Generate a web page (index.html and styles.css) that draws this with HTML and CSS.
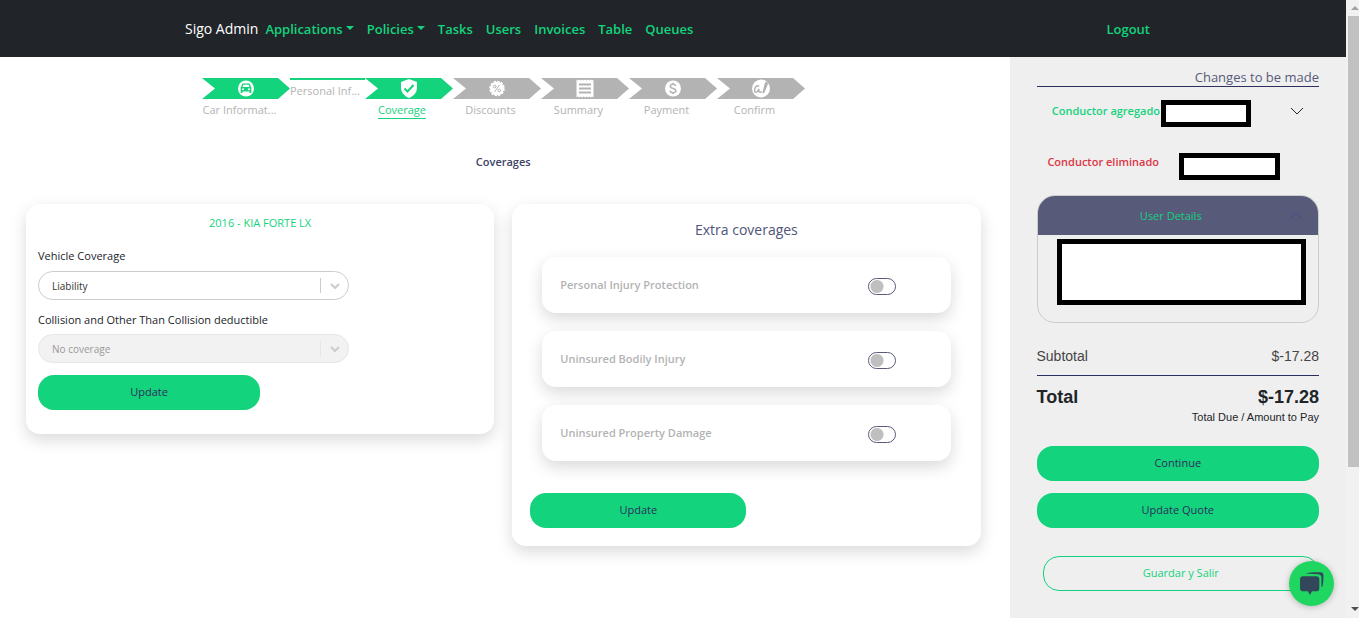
FILE: index.html
```html
<!DOCTYPE html>
<html lang="en">
<head>
  <meta charset="UTF-8" />
  <meta name="viewport" content="width=device-width, initial-scale=1.0" />
  <title>Sigo Admin</title>
  <link rel="stylesheet" href="styles.css">
</head>
<body>

  <div class="app">
    <header class="navbar">
      <nav class="nav">
        <a class="brand" href="#">Sigo Admin</a>
        <a class="dropdown" href="#">Applications</a>
        <a class="dropdown" href="#">Policies</a>
        <a href="#">Tasks</a>
        <a href="#">Users</a>
        <a href="#">Invoices</a>
        <a href="#">Table</a>
        <a href="#">Queues</a>
        <a class="logout" href="#">Logout</a>
      </nav>
    </header>

    <div class="content">
      <main class="main">
        <!-- Steps -->
        <ol class="steps">
          <li class="step done">
            <svg class="arrow" viewBox="0 0 88 21">
              <path class="shape" d="M0 0H76L88 10.500L76 21H0L13 10.500Z" />
              <circle cx="44" cy="10.500" r="8" fill="#fff" />
              <path class="shape" d="M40.500 5.500h7l1.800 4v5.500h-1.800v-1.500h-7v1.500h-1.800v-5.500z" />
              <path d="M41.300 6.800h5.400l.9 2.200h-7.200z" fill="#fff" />
              <circle cx="41" cy="11.300" r="1" fill="#fff" />
              <circle cx="47" cy="11.300" r="1" fill="#fff" />
            </svg>
            <span class="step-label">Car Informat...</span>
          </li>
          <li class="step small">
            <div class="line"></div>
            <span class="step-label">Personal Inf...</span>
          </li>
          <li class="step done current">
            <svg class="arrow" viewBox="0 0 88 21">
              <path class="shape" d="M0 0H76L88 10.500L76 21H0L13 10.500Z" />
              <path d="M44 1l8 3v5.500c0 5-3.300 8.500-8 10.500-4.700-2-8-5.500-8-10.500V4z" fill="#fff" />
              <path class="mark" d="M39.500 10.500l3 3 6-6.500" />
            </svg>
            <span class="step-label">Coverage</span>
          </li>
          <li class="step">
            <svg class="arrow" viewBox="0 0 88 21">
              <path class="shape" d="M0 0H76L88 10.500L76 21H0L13 10.500Z" />
              <circle cx="44" cy="10.500" r="6.800" fill="#fff" />
              <circle cx="44" cy="10.500" r="6.800" fill="none" stroke="#fff" stroke-width="2" stroke-dasharray="2.300 1.260" />
              <path class="thin" d="M41.500 14l5-7" />
              <circle class="thin" cx="41.700" cy="8.500" r="1.300" />
              <circle class="thin" cx="46.300" cy="12.500" r="1.300" />
            </svg>
            <span class="step-label">Discounts</span>
          </li>
          <li class="step">
            <svg class="arrow" viewBox="0 0 88 21">
              <path class="shape" d="M0 0H76L88 10.500L76 21H0L13 10.500Z" />
              <path d="M35.500 1.500l1.400 1 1.400-1 1.400 1 1.400-1 1.400 1 1.500-1 1.500 1 1.400-1 1.400 1 1.400-1 1.400 1 1.400-1v18l-1.400-1-1.400 1-1.400-1-1.400 1-1.400-1-1.500 1-1.500-1-1.400 1-1.400-1-1.400 1-1.400-1-1.400 1z" fill="#fff" />
              <path class="mark" d="M38 6.500h12M38 10.500h12M38 14.500h12" />
            </svg>
            <span class="step-label">Summary</span>
          </li>
          <li class="step">
            <svg class="arrow" viewBox="0 0 88 21">
              <path class="shape" d="M0 0H76L88 10.500L76 21H0L13 10.500Z" />
              <circle cx="44" cy="10.500" r="8" fill="#fff" />
              <path class="mark thick" d="M46.800 8c-.4-1.200-1.400-1.700-2.800-1.700-1.600 0-2.700.8-2.700 2 0 2.900 5.600 1.400 5.600 4.400 0 1.300-1.200 2-2.900 2-1.600 0-2.700-.7-3-2M44 4.800v1.500M44 14.700v1.500" />
            </svg>
            <span class="step-label">Payment</span>
          </li>
          <li class="step">
            <svg class="arrow" viewBox="0 0 88 21">
              <path class="shape" d="M0 0H76L88 10.500L76 21H0L13 10.500Z" />
              <circle cx="44" cy="10.500" r="9" fill="#fff" />
              <path class="mark thick" d="M42 8.500c-1.200-1.500-3.200-.5-4 1.500-1 2.500-.2 4.500 1.200 4.200 1.300-.2 2-1.700 2.800-3.200-.3 1.700 0 3 .8 3.200s1.400 0 1.900-.6" />
              <path class="shape" d="M48 4.500l2.500-1 .3 3-3.300 8-2 1.500.3-3z" />
            </svg>
            <span class="step-label">Confirm</span>
          </li>
        </ol>

        <h1 class="page-title">Coverages</h1>

        <div class="cards">
          <section class="card vehicle">
            <h2 class="vehicle-name">2016 - KIA FORTE LX</h2>

            <label for="coverage">Vehicle Coverage</label>
            <div class="select">
              <select id="coverage">
                <option>Liability</option>
                <option>Full coverage</option>
              </select>
              <svg viewBox="0 0 28 15"><path d="M10 6l4 4 4-4" /></svg>
            </div>

            <label for="deductible">Collision and Other Than Collision deductible</label>
            <div class="select disabled">
              <select id="deductible" disabled>
                <option>No coverage</option>
              </select>
              <svg viewBox="0 0 28 15"><path d="M10 6l4 4 4-4" /></svg>
            </div>

            <button class="btn half" type="button">Update</button>
          </section>

          <section class="card extra">
            <h2>Extra coverages</h2>
            <div class="extra-list">
              <label class="extra-item">
                <span>Personal Injury Protection</span>
                <input type="checkbox" class="toggle">
              </label>
              <label class="extra-item">
                <span>Uninsured Bodily Injury</span>
                <input type="checkbox" class="toggle">
              </label>
              <label class="extra-item">
                <span>Uninsured Property Damage</span>
                <input type="checkbox" class="toggle">
              </label>
            </div>
            <button class="btn half" type="button">Update</button>
          </section>
        </div>
      </main>

      <aside class="sidebar">
        <h2 class="changes-title">Changes to be made</h2>

        <div class="change added">
          <span>Conductor agregado</span>
          <div class="box"></div>
          <svg class="chevron" viewBox="0 0 14 8"><path d="M1 1l6 6 6-6" /></svg>
        </div>
        <div class="change removed">
          <span>Conductor eliminado</span>
          <div class="box"></div>
        </div>

        <div class="details">
          <button class="details-head" type="button">
            <span>User Details</span>
            <svg class="chevron" viewBox="0 0 14 8"><path d="M1 7l6-6 6 6" /></svg>
          </button>
          <div class="details-body">
            <div class="box"></div>
          </div>
        </div>

        <div class="row subtotal"><span>Subtotal</span><span>$-17.28</span></div>
        <div class="row total"><span>Total</span><span>$-17.28</span></div>
        <p class="note">Total Due / Amount to Pay</p>

        <div class="actions">
          <button class="btn" type="button">Continue</button>
          <button class="btn" type="button">Update Quote</button>
          <button class="btn outline" type="button">Guardar y Salir</button>
        </div>
      </aside>
    </div>
  </div>

  <!-- Scroll track -->
  <div class="scrollbar">
    <svg class="up" viewBox="0 0 11 16"><path d="M3 10l4-4 4 4z" /></svg>
    <div class="thumb"></div>
    <svg class="down" viewBox="0 0 11 16"><path d="M3 5h8l-4 4z" /></svg>
  </div>

  <button class="chat" type="button" aria-label="Chat">
    <svg viewBox="0 0 24 24">
      <path d="M4 5h12.500a3 3 0 0 1 3 3v8.500a3 3 0 0 1-3 3h-4L10.500 23l-2-3.500H4a3 3 0 0 1-3-3V8a3 3 0 0 1 3-3z" />
      <path d="M6 2.500C9 1 17 1 21 1.200c1.500.1 2.400 1 2.400 2.500.2 4 0 8-.9 11.300l-1-.2V6.500a3.500 3.500 0 0 0-3.500-3.500z" />
    </svg>
  </button>

</body>
</html>
```
FILE: styles.css
```css
* {
  box-sizing: border-box;
}

body {
  margin: 0;
  display: flex;
  height: 100vh;
  overflow: hidden;
  background: #fff;
  color: #212529;
  font-family: "Open Sans", "Noto Sans", sans-serif;
  font-size: 11px;
  line-height: 16px;
}

h1, h2, p, ol {
  margin: 0;
  padding: 0;
}

a {
  text-decoration: none;
}

button, select {
  font-family: inherit;
  font-size: inherit;
}

.app {
  flex: 1;
  display: flex;
  flex-direction: column;
  min-width: 0;
}

/* Navbar */
.navbar {
  background: #212529;
  padding: 0 196px 0 185px;
}

.nav {
  display: flex;
  align-items: center;
  gap: 13px;
  height: 57px;
}

.nav a {
  color: #13d37d;
  font-size: 13px;
  font-weight: 600;
}

.nav .brand {
  color: #fff;
  font-size: 14px;
  font-weight: 400;
  margin-right: -6px;
}

.dropdown::after {
  content: "";
  display: inline-block;
  margin-left: 3px;
  vertical-align: 4px;
  border: 4px solid transparent;
  border-top-color: #13d37d;
  border-bottom: 0;
}

.nav .logout {
  margin-left: auto;
}

.content {
  flex: 1;
  display: grid;
  grid-template-columns: 3fr 1fr;
}

.main {
  padding: 21px 29px 0 26px;
}

/* Steps */
.steps {
  display: flex;
  list-style: none;
  margin-left: 176px;
  height: 44px;
}

.step {
  width: 88px;
  color: #b3b3b3;
}

.step.small {
  width: 75px;
}

.arrow {
  display: block;
  width: 88px;
  height: 21px;
}

.shape {
  fill: #b3b3b3;
}

.mark {
  fill: none;
  stroke: #b3b3b3;
  stroke-width: 2;
}

.thick {
  stroke-width: 1.5;
}

.thin {
  fill: none;
  stroke: #b3b3b3;
}

.done .shape {
  fill: #13d37d;
}

.done .mark {
  stroke: #13d37d;
}

.line {
  height: 2px;
  background: #13d37d;
}

.step-label {
  display: block;
  width: 75px;
  margin-top: 3px;
  text-align: center;
  white-space: nowrap;
  font-weight: 500;
}

.small .step-label {
  text-align: left;
}

.current .step-label {
  width: fit-content;
  margin-left: 13px;
  color: #13d37d;
  border-bottom: 1px solid #13d37d;
}

.page-title {
  margin: 32px 0 34px;
  text-align: center;
  font-size: 11px;
  line-height: 16px;
  font-weight: 600;
  color: #3d4266;
}

/* Cards */
.cards {
  display: grid;
  grid-template-columns: 1fr 1fr;
  align-items: start;
  gap: 18px;
}

.card {
  background: #fff;
  border-radius: 14px;
  box-shadow: 0 6px 16px rgba(0, 0, 0, 0.15);
}

.vehicle {
  padding: 11px 12px 24px;
}

.vehicle-name {
  text-align: center;
  font-size: 11px;
  line-height: 16px;
  font-weight: 400;
  color: #13d37d;
  margin-bottom: 17px;
}

.vehicle label {
  display: block;
  color: #212529;
}

.select {
  position: relative;
  width: 70%;
  height: 29px;
  margin: 7px 0 12px;
}

.select select {
  width: 100%;
  height: 100%;
  padding: 0 13px;
  appearance: none;
  background: #fff;
  border: 1px solid #ccc;
  border-radius: 15px;
  color: #333;
  font-size: 10px;
  opacity: 1;
}

/* Divider and arrow sit over the select */
.select svg {
  position: absolute;
  top: 7px;
  right: 0;
  width: 29px;
  height: 15px;
  border-left: 1px solid #ccc;
  fill: none;
  stroke: #ccc;
  stroke-width: 2;
  pointer-events: none;
}

.select.disabled {
  margin-top: 6px;
}

.disabled select {
  background: #f2f2f2;
  border-color: #e6e6e6;
  color: #999;
}

.disabled svg {
  border-color: #e6e6e6;
}

.btn {
  display: block;
  width: 100%;
  height: 35px;
  padding: 0 0 2px;
  background: #13d37d;
  border: 0;
  border-radius: 16px;
  color: #2b2f5b;
  font-size: 11px;
}

.btn.half {
  width: 50%;
}

.extra {
  padding: 18px;
}

.extra h2 {
  text-align: center;
  font-size: 14px;
  line-height: 16px;
  font-weight: 500;
  color: #4f5478;
}

.extra-list {
  display: flex;
  flex-direction: column;
  gap: 18px;
  margin: 19px 12px 32px;
}

.extra-item {
  display: flex;
  align-items: center;
  justify-content: space-between;
  height: 56px;
  padding: 0 55px 0 18px;
  border-radius: 14px;
  box-shadow: 0 6px 16px rgba(0, 0, 0, 0.15);
  background: #fff;
  color: #b3b3b3;
  font-weight: 600;
}

.toggle {
  appearance: none;
  width: 28px;
  height: 17px;
  margin: 2px 0 0;
  border: 1px solid #575a79;
  border-radius: 9px;
  background: radial-gradient(circle at 8px 50%, #bfbfbf 6px, transparent 7px);
}

/* Sidebar */
.sidebar {
  padding: 12px 27px;
  background: #efefef;
}

.changes-title {
  padding-bottom: 1px;
  border-bottom: 1px solid #2b2f5b;
  text-align: right;
  font-size: 13px;
  line-height: 16px;
  font-weight: 400;
  color: #575a79;
}

.box {
  background: #fff;
  border: 5px solid #000;
}

.change {
  display: flex;
  align-items: center;
  height: 27px;
  font-weight: 600;
}

.change span {
  flex: 1;
  padding-bottom: 5px;
  text-align: right;
  white-space: nowrap;
}

.change .box {
  height: 27px;
}

.chevron {
  width: 14px;
  height: 8px;
  fill: none;
  stroke: #212529;
}

.added {
  margin-top: 13px;
  padding-right: 15px;
  color: #13d37d;
}

.added .box {
  width: 90px;
  margin: 0 39px 0 1px;
}

.added .chevron {
  margin-bottom: 5px;
}

.removed {
  margin-top: 26px;
  padding-right: 39px;
  color: #dc3545;
}

.removed span {
  padding-bottom: 9px;
}

.removed .box {
  width: 101px;
  margin-left: 20px;
}

.details {
  height: 128px;
  margin-top: 15px;
  border: 1px solid #ccc;
  border-radius: 18px;
  overflow: hidden;
}

.details-head {
  display: flex;
  align-items: center;
  width: 100%;
  height: 39px;
  padding: 0 15px;
  background: #575a79;
  border: 0;
  color: #13d37d;
}

.details-head span {
  flex: 1;
}

.details-head .chevron {
  stroke: #563d8f;
}

.details-body {
  padding: 4px 12px 0 19px;
}

.details-body .box {
  height: 66px;
}

.row {
  display: flex;
  justify-content: space-between;
  font-family: "Liberation Sans", Arial, sans-serif;
}

.subtotal {
  margin-top: 25px;
  padding-bottom: 11px;
  border-bottom: 1px solid #2b2f5b;
  font-size: 14px;
  color: #444;
}

.total {
  margin-top: 11px;
  font-size: 18px;
  line-height: 20px;
  font-weight: 700;
}

.note {
  margin-top: 3px;
  text-align: right;
  font-family: "Liberation Sans", Arial, sans-serif;
  font-size: 11px;
  line-height: 14px;
}

.actions {
  display: flex;
  flex-direction: column;
  gap: 12px;
  margin-top: 22px;
}

.btn.outline {
  width: auto;
  margin: 16px 0 0 6px;
  background: transparent;
  border: 1px solid #13d37d;
  color: #13d37d;
}

/* Scroll track */
.scrollbar {
  display: flex;
  flex-direction: column;
  width: 13px;
  padding-left: 2px;
  background: #f1f1f1;
}

.scrollbar svg {
  flex: none;
  height: 16px;
  fill: #505050;
}

.scrollbar .up {
  fill: #a3a3a3;
}

.scrollbar .thumb {
  height: 73%;
  background: #c1c1c1;
}

.scrollbar .down {
  margin-top: auto;
}

.chat {
  position: fixed;
  right: 25px;
  bottom: 12px;
  width: 45px;
  height: 45px;
  padding: 10px;
  border: 0;
  border-radius: 50%;
  background: #1fd760;
  box-shadow: 0 1px 6px rgba(0, 0, 0, 0.25);
}

.chat svg {
  display: block;
  width: 25px;
  height: 25px;
  fill: #33475b;
}
```
